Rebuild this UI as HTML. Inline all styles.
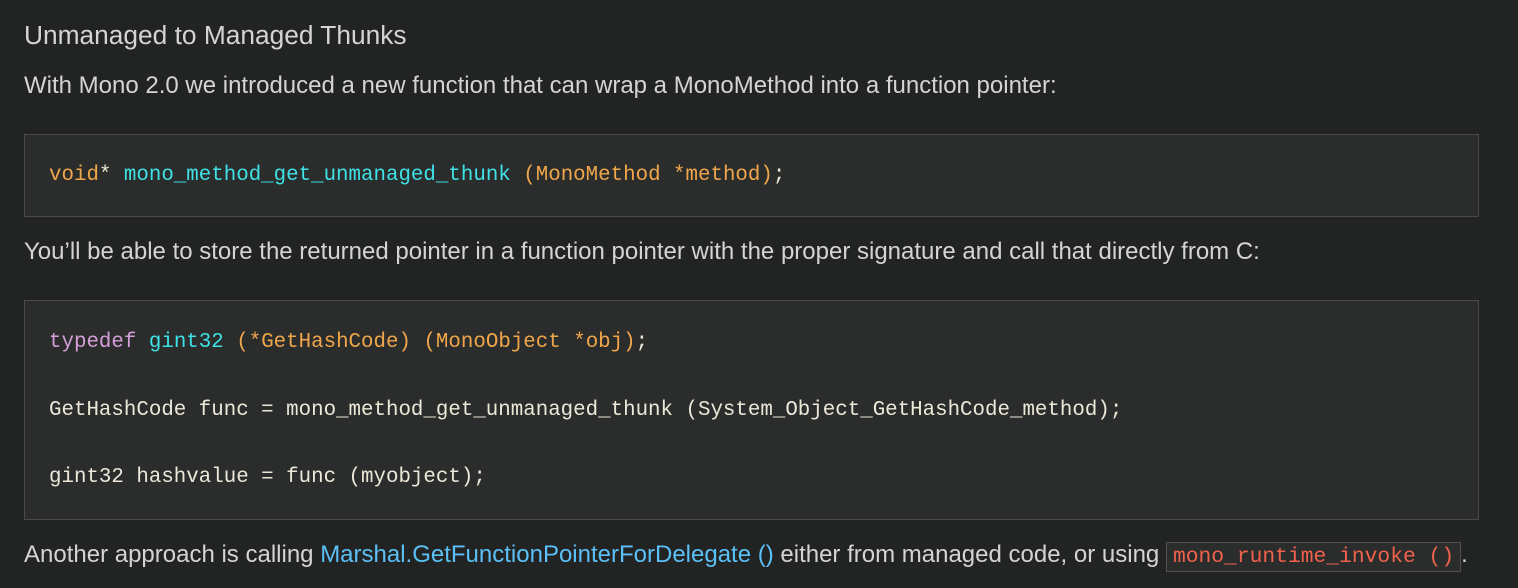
<!DOCTYPE html>
<html><head><style>
body{margin:0;background:#222323;width:1518px;height:588px;overflow:hidden;font-family:"Liberation Sans",sans-serif;color:#d4d4d4;position:relative}
.t{position:absolute;left:24px;white-space:nowrap;font-size:24px;line-height:30px}
h2{position:absolute;left:24px;top:20px;margin:0;font-weight:normal;font-size:26.3px;color:#d4d4d4;line-height:30px}
.box{position:absolute;left:24px;width:1453px;background:#2b2c2c;border:1px solid #4a4a4a}
.c{position:absolute;left:24px;font-family:"Liberation Mono",monospace;font-size:20.8px;white-space:pre;color:#ece8d8;line-height:30px}
.o{color:#f0a64a}.cy{color:#3ee2e6}.p{color:#d59ed9}
a{color:#5bc0f5;text-decoration:none}
.ic{font-family:"Liberation Mono",monospace;font-size:21.3px;color:#f0624c;background:#2b2c2c;border:1px solid #505050;padding:2px 6px}
</style></head><body>
<h2>Unmanaged to Managed Thunks</h2>
<div class="t" style="top:71px">With Mono 2.0 we introduced a new function that can wrap a MonoMethod into a function pointer:</div>
<div class="box" style="top:134px;height:81px"><div class="c" style="top:26px"><span class="o">void</span>* <span class="cy">mono_method_get_unmanaged_thunk</span> <span class="o">(MonoMethod *method)</span>;</div></div>
<div class="t" style="top:237px">You’ll be able to store the returned pointer in a function pointer with the proper signature and call that directly from C:</div>
<div class="box" style="top:300px;height:218px">
<div class="c" style="top:27px"><span class="p">typedef</span> <span class="cy">gint32</span> <span class="o">(*GetHashCode)</span> <span class="o">(MonoObject *obj)</span>;</div>
<div class="c" style="top:95px">GetHashCode func = mono_method_get_unmanaged_thunk (System_Object_GetHashCode_method);</div>
<div class="c" style="top:162px">gint32 hashvalue = func (myobject);</div>
</div>
<div class="t" style="top:540px">Another approach is calling <a>Marshal.GetFunctionPointerForDelegate ()</a> either from managed code, or using <span class="ic">mono_runtime_invoke ()</span>.</div>
</body></html>
